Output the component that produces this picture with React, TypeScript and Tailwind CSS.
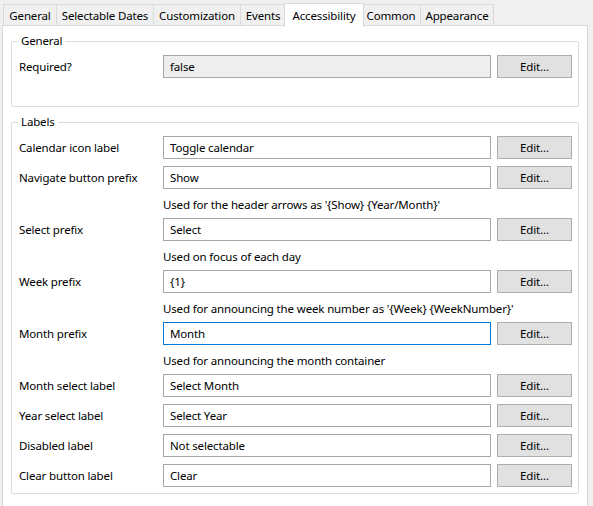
import React from "react";

const tabs = [
  { name: "General", w: "w-[54px]" },
  { name: "Selectable Dates", w: "w-[98px]" },
  { name: "Customization", w: "w-[88px]" },
  { name: "Events", w: "w-[46px]" },
  { name: "Accessibility", w: "w-[80px]", active: true },
  { name: "Common", w: "w-[60px]" },
  { name: "Appearance", w: "w-[74px]" },
];

type Row = { label: string; value: string; hint?: string; focused?: boolean };

const rows: Row[] = [
  { label: "Calendar icon label", value: "Toggle calendar" },
  { label: "Navigate button prefix", value: "Show", hint: "Used for the header arrows as '{Show} {Year/Month}'" },
  { label: "Select prefix", value: "Select", hint: "Used on focus of each day" },
  { label: "Week prefix", value: "{1}", hint: "Used for announcing the week number as '{Week} {WeekNumber}'" },
  { label: "Month prefix", value: "Month", hint: "Used for announcing the month container", focused: true },
  { label: "Month select label", value: "Select Month" },
  { label: "Year select label", value: "Select Year" },
  { label: "Disabled label", value: "Not selectable" },
  { label: "Clear button label", value: "Clear" },
];

function Field({ label, value, disabled, focused }: { label: string; value: string; disabled?: boolean; focused?: boolean }) {
  return (
    <div className="flex items-center h-[23px]">
      <div className="w-[151px] pl-[7px] leading-none">{label}</div>
      <div
        className={
          "w-[328px] h-[23px] flex items-center pl-[6px] border " +
          (focused ? "border-[#0078d7] bg-white" : disabled ? "border-[#a7a7a7] bg-[#eeeeee]" : "border-[#a7a7a7] bg-white")
        }
      >
        {value}
      </div>
      <div className="ml-[6px] w-[75px] h-[23px] flex items-center justify-center border border-[#adadad] bg-[#e1e1e1]">
        Edit...
      </div>
    </div>
  );
}

export default function App() {
  return (
    <div
      className="w-[593px] h-[506px] bg-[#f0f0f0] overflow-hidden text-[11.5px] tracking-[-0.15px] text-black"
      style={{ fontFamily: '"Noto Sans", "Open Sans", sans-serif' }}
    >
      <div className="flex items-end h-[26px] pl-[3px] pt-[2px]">
        {tabs.map((t) =>
          t.active ? (
            <div
              key={t.name}
              className={`${t.w} h-[24px] -mx-[2px] relative z-10 -mb-px bg-white border border-b-0 border-[#d9d9d9] flex items-center justify-center pt-[1px]`}
            >
              {t.name}
            </div>
          ) : (
            <div
              key={t.name}
              className={`${t.w} h-[22px] bg-[#f0f0f0] border border-[#d9d9d9] -ml-px first:ml-0 flex items-center justify-center pt-[1px]`}
            >
              {t.name}
            </div>
          )
        )}
      </div>
      <div className="ml-[2px] w-[586px] h-[500px] bg-white border border-[#d9d9d9] -mt-px px-[8px] pt-[7px]">
        <fieldset className="border border-[#dcdcdc] rounded-[2px] pt-[6px] pb-[28px]">
          <legend className="ml-[6px] px-[3px] leading-[16px]">General</legend>
          <Field label="Required?" value="false" disabled />
        </fieldset>
        <fieldset className="mt-[7px] border border-[#dcdcdc] rounded-[2px] pt-[6px] pb-[6px] flex flex-col">
          <legend className="ml-[6px] px-[3px] leading-[16px]">Labels</legend>
          {rows.map((r, i) => (
            <div key={r.label} className={i === 0 ? "" : "mt-[7px]"}>
              <Field label={r.label} value={r.value} focused={r.focused} />
              {r.hint && (
                <div className="pl-[151px] h-[22px] pt-[9px] leading-[14px]">{r.hint}</div>
              )}
            </div>
          ))}
        </fieldset>
      </div>
    </div>
  );
}
